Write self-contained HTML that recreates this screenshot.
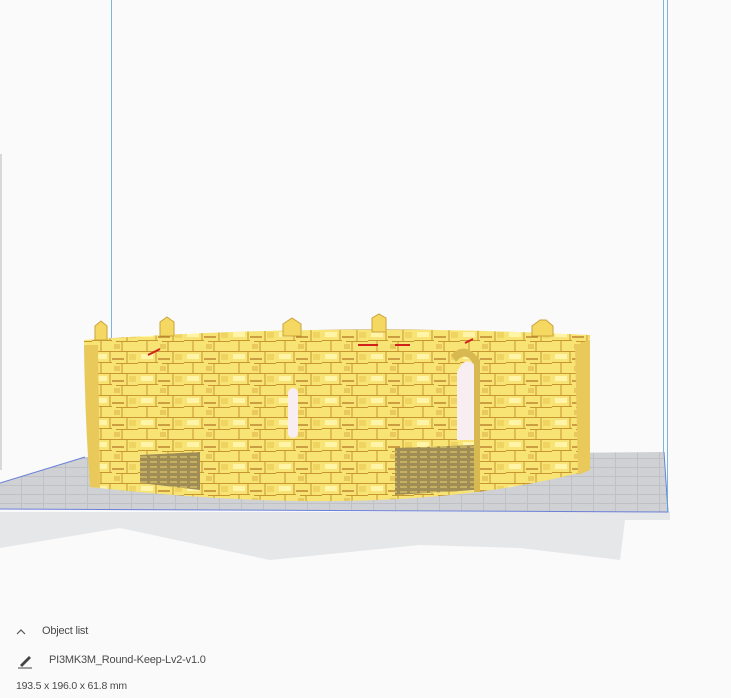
<!DOCTYPE html>
<html><head><meta charset="utf-8"><style>
html,body{margin:0;padding:0;background:#fafafa;width:731px;height:698px;overflow:hidden;font-family:"Liberation Sans",sans-serif;}
.t{position:absolute;color:#4a4a4a;font-size:11px;letter-spacing:-0.2px;}
</style></head><body>
<svg width="731" height="698" style="position:absolute;left:0;top:0">
<defs>
<pattern id="st" width="46" height="22" patternUnits="userSpaceOnUse">
<rect width="46" height="22" fill="#f8e475"/>
<path d="M0 10.5h20M24 11.5h22M0 21.5h46M18 0v10M35 0v11M9 11v10M30 12v9" stroke="#c8962e" stroke-width="1"/>
<rect x="3" y="2" width="12" height="5" fill="#fff4a8"/>
<rect x="22" y="14" width="6" height="5" fill="#e8c95a"/>
<rect x="37" y="2" width="7" height="6" fill="#efd462"/>
<path d="M20 7h12" stroke="#b0701e" stroke-width="1.2"/>
</pattern>
<pattern id="fl" width="10" height="5" patternUnits="userSpaceOnUse">
<rect width="10" height="5" fill="#a08c55"/>
<path d="M0 2h7" stroke="#e8d46a" stroke-width="1"/>
</pattern>
<pattern id="gr" width="22" height="9" patternUnits="userSpaceOnUse">
<rect width="22" height="9" fill="#d0d1d4"/>
<path d="M0 8.5h22M21.5 0v9" stroke="#c0c1c4" stroke-width="1"/>
</pattern>
</defs>
<path d="M0 154h2v316h-2z" fill="#d8d8d8"/>
<path d="M0 512 L0 548 L120 528 L270 560 L420 545 L520 548 L620 560 L625 520 L670 520 L670 512 Z" fill="#e6e7e9"/>
<path d="M0 483 L85 457 L664 452 L668 512 L0 509 Z" fill="url(#gr)"/>
<path d="M0 483 L85 457" stroke="#6a7fd8" stroke-width="1"/>
<path d="M0 509 L668 512 L664 452" stroke="#6a7fd8" stroke-width="1" fill="none"/>
<path d="M111.5 0V460M663.5 0V452M667.5 0V512" stroke="#5aa6d4" stroke-width="0.8"/>
<path d="M84 340 Q330 322 590 335 L590 470 Q400 522 90 487 Z" fill="url(#st)"/>
<path d="M140 455 L200 452 L200 490 L140 483Z" fill="url(#fl)"/>
<path d="M395 448 L475 445 L475 490 L395 495Z" fill="url(#fl)"/>
<path d="M84 345 Q85 420 90 487 L100 488 L98 345Z" fill="#e8c95a"/>
<path d="M575 345 L590 340 L590 470 L578 475Z" fill="#e8c95a"/>
<rect x="288" y="388" width="10" height="50" rx="5" fill="#f8eef2"/>
<path d="M457 372 Q465 355 475 365 L475 440 L457 440Z" fill="#f8eef2"/>
<path d="M451 355 Q465 340 480 360 L480 492 L474 492 L474 365 Q466 350 456 362Z" fill="#d8b850"/>
<g fill="#f5d862" stroke="#c9a23c" stroke-width="1">
<path d="M95 340v-14l6-5 6 5v14z"/>
<path d="M160 336v-14l7-5 7 5v14z"/>
<path d="M283 336v-12l9-6 9 6v12z"/>
<path d="M372 332v-14l7-4 7 4v14z"/>
<path d="M532 336v-10l8-6 6 0 7 6v10z"/>
</g>
<path d="M148 355l12-6M358 345h20M395 345l15 0M465 343l8-4" stroke="#d02020" stroke-width="2"/>
<path d="M17 634l4-4 4 4" stroke="#555" stroke-width="1.2" fill="none"/>
<path d="M20 665l9-9 2 2-9 9z" fill="#444"/>
<path d="M18 668h14" stroke="#444" stroke-width="1"/>
</svg>
<div class="t" style="left:42px;top:625px">Object list</div>
<div class="t" style="left:49px;top:654px">PI3MK3M_Round-Keep-Lv2-v1.0</div>
<div class="t" style="left:16px;top:680px;font-size:10.5px">193.5 x 196.0 x 61.8 mm</div>
</body></html>
